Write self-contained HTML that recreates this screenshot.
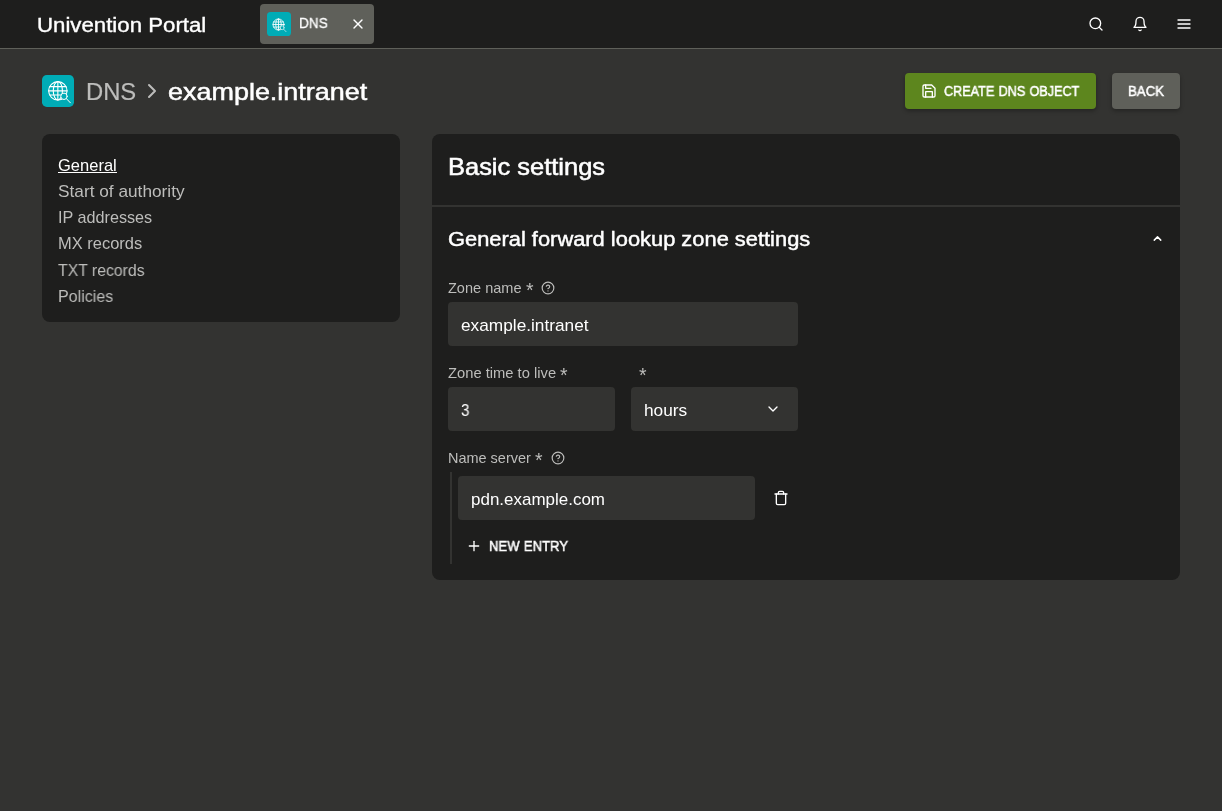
<!DOCTYPE html>
<html lang="en">
<head>
<meta charset="utf-8">
<title>Univention Portal</title>
<style>
*{box-sizing:border-box;margin:0;padding:0}
html,body{width:1222px;height:811px;overflow:hidden;background:#333331;color:#fff;font-family:"Liberation Sans",sans-serif}
body{position:relative}
.abs{position:absolute;white-space:nowrap;line-height:1;will-change:transform}
#hdr{position:absolute;left:0;top:0;width:1222px;height:49px;background:#1e1e1d;border-bottom:1px solid #5f605a}
#tab{position:absolute;left:260px;top:4px;width:114px;height:40px;background:#5f605a;border-radius:4px}
.ico{position:absolute;background:#00acb6}
.panel{position:absolute;background:#1e1e1d;border-radius:8px}
.btn{position:absolute;height:36px;border-radius:4px;top:73px;box-shadow:0 2px 4px rgba(0,0,0,.3)}
.inp{position:absolute;background:#333331;border-radius:4px;height:44px}
.bar{position:absolute;background:#333331}
svg{position:absolute;overflow:visible}
</style>
</head>
<body>
<div id="hdr"></div>
<div id="tab"></div>
<div class="ico" style="left:267px;top:12px;width:24px;height:24px;border-radius:3.6px"></div>
<svg style="left:269.1px;top:14.7px" width="19.2" height="19.2" viewBox="0 0 32 32" fill="none" stroke="#fff" stroke-width="1.45" stroke-linecap="round" stroke-linejoin="round"><circle cx="15.85" cy="15.85" r="9.2"/><ellipse cx="15.85" cy="15.85" rx="4.6" ry="9.2"/><line x1="15.85" y1="6.65" x2="15.85" y2="25.05"/><line x1="6.65" y1="15.85" x2="25.05" y2="15.85"/><path d="M7.7 11.65h16.3M7.7 20.05h16.3"/><circle cx="22" cy="21.3" r="3.2" fill="#00acb6" stroke-width="1"/><line x1="24.4" y1="23.7" x2="28.4" y2="27.8" stroke-width="1"/></svg>
<svg style="left:350px;top:16px" width="16" height="16" viewBox="0 0 24 24" fill="none" stroke="#fff" stroke-width="2" stroke-linecap="round" stroke-linejoin="round"><line x1="18" y1="6" x2="6" y2="18"/><line x1="6" y1="6" x2="18" y2="18"/></svg>
<svg style="left:1088px;top:16px" width="16" height="16" viewBox="0 0 24 24" fill="none" stroke="#fff" stroke-width="2" stroke-linecap="round" stroke-linejoin="round"><circle cx="11" cy="11" r="8"/><line x1="21" y1="21" x2="16.65" y2="16.65"/></svg>
<svg style="left:1132px;top:16px" width="16" height="16" viewBox="0 0 24 24" fill="none" stroke="#fff" stroke-width="2" stroke-linecap="round" stroke-linejoin="round"><path d="M18 8A6 6 0 0 0 6 8c0 7-3 9-3 9h18s-3-2-3-9"/><path d="M13.73 21a2 2 0 0 1-3.46 0"/></svg>
<svg style="left:1176px;top:16px" width="16" height="16" viewBox="0 0 24 24" fill="none" stroke="#fff" stroke-width="2" stroke-linecap="round" stroke-linejoin="round"><line x1="3" y1="12" x2="21" y2="12"/><line x1="3" y1="6" x2="21" y2="6"/><line x1="3" y1="18" x2="21" y2="18"/></svg>

<div class="ico" style="left:42px;top:75px;width:32px;height:32px;border-radius:4.8px"></div>
<svg style="left:42px;top:75px" width="32" height="32" viewBox="0 0 32 32" fill="none" stroke="#fff" stroke-width="1.1" stroke-linecap="round" stroke-linejoin="round"><circle cx="15.85" cy="15.85" r="9.2"/><ellipse cx="15.85" cy="15.85" rx="4.6" ry="9.2"/><line x1="15.85" y1="6.65" x2="15.85" y2="25.05"/><line x1="6.65" y1="15.85" x2="25.05" y2="15.85"/><path d="M7.7 11.65h16.3M7.7 20.05h16.3"/><circle cx="22" cy="21.3" r="3.2" fill="#00acb6" stroke-width="1"/><line x1="24.4" y1="23.7" x2="28.4" y2="27.8" stroke-width="1"/></svg>
<svg style="left:140px;top:79px" width="24" height="24" viewBox="0 0 24 24" fill="none" stroke="#bdbdbb" stroke-width="2" stroke-linecap="round" stroke-linejoin="round"><polyline points="9 18 15 12 9 6"/></svg>

<div class="btn" style="left:905px;width:191px;background:#5d861e"></div>
<svg style="left:921px;top:83px" width="16" height="16" viewBox="0 0 24 24" fill="none" stroke="#fff" stroke-width="2" stroke-linecap="round" stroke-linejoin="round"><path d="M19 21H5a2 2 0 0 1-2-2V5a2 2 0 0 1 2-2h11l5 5v11a2 2 0 0 1-2 2z"/><polyline points="17 21 17 13 7 13 7 21"/><polyline points="7 3 7 8 15 8"/></svg>
<div class="btn" style="left:1112px;width:68px;background:#5f605a"></div>

<div class="panel" style="left:42px;top:134px;width:358px;height:188px"></div>
<div class="bar" style="left:58px;top:172px;width:59px;height:1px;background:#fff"></div>
<div class="panel" style="left:432px;top:134px;width:748px;height:446px"></div>
<div class="bar" style="left:432px;top:205px;width:748px;height:2px"></div>
<svg style="left:1150.5px;top:231.5px" width="13" height="13" viewBox="0 0 24 24" fill="none" stroke="#fff" stroke-width="2.7" stroke-linecap="round" stroke-linejoin="round"><polyline points="18 15 12 9 6 15"/></svg>

<svg style="left:541.2px;top:281.1px" width="14" height="14" viewBox="0 0 24 24" fill="none" stroke="#bdbdbb" stroke-width="2" stroke-linecap="round" stroke-linejoin="round"><circle cx="12" cy="12" r="10"/><path d="M9.09 9a3 3 0 0 1 5.83 1c0 2-3 3-3 3"/><line x1="12" y1="17" x2="12.01" y2="17"/></svg>
<div class="inp" style="left:448px;top:302px;width:350px"></div>
<div class="inp" style="left:448px;top:387px;width:167px"></div>
<div class="inp" style="left:631px;top:387px;width:167px"></div>
<svg style="left:765px;top:401px" width="16" height="16" viewBox="0 0 24 24" fill="none" stroke="#fff" stroke-width="2" stroke-linecap="round" stroke-linejoin="round"><polyline points="6 9 12 15 18 9"/></svg>
<svg style="left:551.2px;top:451.1px" width="14" height="14" viewBox="0 0 24 24" fill="none" stroke="#bdbdbb" stroke-width="2" stroke-linecap="round" stroke-linejoin="round"><circle cx="12" cy="12" r="10"/><path d="M9.09 9a3 3 0 0 1 5.83 1c0 2-3 3-3 3"/><line x1="12" y1="17" x2="12.01" y2="17"/></svg>
<div class="bar" style="left:450px;top:472px;width:2px;height:92px"></div>
<div class="inp" style="left:458px;top:476px;width:297px"></div>
<svg style="left:773px;top:490px" width="16" height="16" viewBox="0 0 24 24" fill="none" stroke="#fff" stroke-width="2" stroke-linecap="round" stroke-linejoin="round"><polyline points="3 6 5 6 21 6"/><path d="M19 6v14a2 2 0 0 1-2 2H7a2 2 0 0 1-2-2V6m3 0V4a2 2 0 0 1 2-2h4a2 2 0 0 1 2 2v2"/></svg>
<svg style="left:466px;top:538px" width="16" height="16" viewBox="0 0 24 24" fill="none" stroke="#fff" stroke-width="2" stroke-linecap="round" stroke-linejoin="round"><line x1="12" y1="5" x2="12" y2="19"/><line x1="5" y1="12" x2="19" y2="12"/></svg>

<div class="abs" style="left:37px;top:16px;color:#fff;font-size:19.5px;font-weight:400;-webkit-text-stroke:0.35px currentColor;transform:scaleX(1.1398);transform-origin:0 0;">Univention Portal</div>
<div class="abs" style="left:299px;top:16px;color:#fff;font-size:14.0px;font-weight:400;-webkit-text-stroke:0.3px currentColor;transform:scaleX(0.9735);transform-origin:0 0;">DNS</div>
<div class="abs" style="left:86px;top:80px;color:#bdbdbb;font-size:23.8px;font-weight:400;-webkit-text-stroke:0.2px currentColor;transform:scaleX(0.9936);transform-origin:0 0;">DNS</div>
<div class="abs" style="left:168px;top:81px;color:#fff;font-size:23.6px;font-weight:400;-webkit-text-stroke:0.5px currentColor;transform:scaleX(1.1423);transform-origin:0 0;">example.intranet</div>
<div class="abs" style="left:944px;top:84px;color:#fff;font-size:14.0px;font-weight:400;word-spacing:0.8px;-webkit-text-stroke:0.5px currentColor;transform:scaleX(0.9028);transform-origin:0 0;">CREATE DNS OBJECT</div>
<div class="abs" style="left:1128px;top:84px;color:#fff;font-size:14.0px;font-weight:400;-webkit-text-stroke:0.5px currentColor;transform:scaleX(0.9459);transform-origin:0 0;">BACK</div>
<div class="abs" style="left:58px;top:157px;color:#fff;font-size:16.2px;font-weight:400;transform:scaleX(1.0202);transform-origin:0 0;">General</div>
<div class="abs" style="left:58px;top:183px;color:#bdbdbb;font-size:16.2px;font-weight:400;transform:scaleX(1.0657);transform-origin:0 0;">Start of authority</div>
<div class="abs" style="left:58px;top:209px;color:#bdbdbb;font-size:16.2px;font-weight:400;transform:scaleX(0.9969);transform-origin:0 0;">IP addresses</div>
<div class="abs" style="left:58px;top:235px;color:#bdbdbb;font-size:16.2px;font-weight:400;transform:scaleX(1.0174);transform-origin:0 0;">MX records</div>
<div class="abs" style="left:58px;top:262px;color:#bdbdbb;font-size:16.2px;font-weight:400;transform:scaleX(0.9748);transform-origin:0 0;">TXT records</div>
<div class="abs" style="left:58px;top:288px;color:#bdbdbb;font-size:16.2px;font-weight:400;transform:scaleX(0.9891);transform-origin:0 0;">Policies</div>
<div class="abs" style="left:448px;top:156px;color:#fff;font-size:23.6px;font-weight:400;-webkit-text-stroke:0.55px currentColor;transform:scaleX(1.0787);transform-origin:0 0;">Basic settings</div>
<div class="abs" style="left:448px;top:230px;color:#fff;font-size:19.7px;font-weight:400;-webkit-text-stroke:0.45px currentColor;transform:scaleX(1.1107);transform-origin:0 0;">General forward lookup zone settings</div>
<div class="abs" style="left:448px;top:281px;color:#bdbdbb;font-size:14.2px;font-weight:400;transform:scaleX(1.0238);transform-origin:0 0;">Zone name</div>
<div class="abs" style="left:526px;top:281px;color:#bdbdbb;font-size:19.5px;font-weight:400;">*</div>
<div class="abs" style="left:461px;top:317px;color:#fff;font-size:16.2px;font-weight:400;transform:scaleX(1.0663);transform-origin:0 0;">example.intranet</div>
<div class="abs" style="left:448px;top:366px;color:#bdbdbb;font-size:14.2px;font-weight:400;transform:scaleX(1.0385);transform-origin:0 0;">Zone time to live</div>
<div class="abs" style="left:560px;top:366px;color:#bdbdbb;font-size:19.5px;font-weight:400;">*</div>
<div class="abs" style="left:639px;top:366px;color:#bdbdbb;font-size:19.5px;font-weight:400;">*</div>
<div class="abs" style="left:461px;top:402px;color:#fff;font-size:16.2px;font-weight:400;transform:scaleX(0.9338);transform-origin:0 0;">3</div>
<div class="abs" style="left:644px;top:402px;color:#fff;font-size:16.2px;font-weight:400;transform:scaleX(1.0679);transform-origin:0 0;">hours</div>
<div class="abs" style="left:448px;top:451px;color:#bdbdbb;font-size:14.2px;font-weight:400;transform:scaleX(1.0196);transform-origin:0 0;">Name server</div>
<div class="abs" style="left:535px;top:451px;color:#bdbdbb;font-size:19.5px;font-weight:400;">*</div>
<div class="abs" style="left:471px;top:491px;color:#fff;font-size:16.2px;font-weight:400;transform:scaleX(1.0488);transform-origin:0 0;">pdn.example.com</div>
<div class="abs" style="left:489px;top:539px;color:#fff;font-size:14.0px;font-weight:400;word-spacing:0.8px;-webkit-text-stroke:0.5px currentColor;transform:scaleX(0.9345);transform-origin:0 0;">NEW ENTRY</div>
</body>
</html>
